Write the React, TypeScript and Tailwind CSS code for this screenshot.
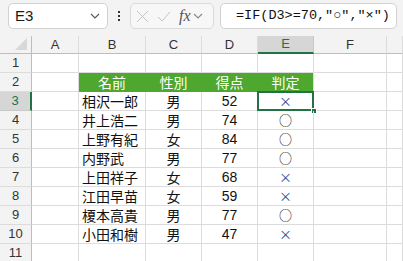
import React from 'react';

const rows = [
  { name: '相沢一郎', sex: '男', score: 52, ok: false },
  { name: '井上浩二', sex: '男', score: 74, ok: true },
  { name: '上野有紀', sex: '女', score: 84, ok: true },
  { name: '内野武', sex: '男', score: 77, ok: true },
  { name: '上田祥子', sex: '女', score: 68, ok: false },
  { name: '江田早苗', sex: '女', score: 59, ok: false },
  { name: '榎本高貴', sex: '男', score: 77, ok: true },
  { name: '小田和樹', sex: '男', score: 47, ok: false },
];

const cols = ['A', 'B', 'C', 'D', 'E', 'F', ''];

const font = { fontFamily: '"Noto Sans CJK JP", "Noto Sans", sans-serif' };

function Chevron({ className }: { className?: string }) {
  return (
    <svg width="10" height="6" viewBox="0 0 10 6" className={className}>
      <path d="M1 1 L5 5 L9 1" fill="none" stroke="currentColor" strokeWidth="1.1" />
    </svg>
  );
}

function Cell({ children, className = '' }: { children?: React.ReactNode; className?: string }) {
  return (
    <div className={`h-[19px] border-r border-b border-[#dcdcdc] flex items-center text-[14px] text-[#111] overflow-hidden ${className}`}>
      {children}
    </div>
  );
}

function RowHead({ n, active }: { n: number; active?: boolean }) {
  return (
    <div
      className={`h-[19px] flex items-center justify-center text-[13px] text-[#333] border-b ${
        active
          ? 'bg-[#d6d6d6] border-r-2 border-r-[#217346] border-b-[#c8c8c8] text-[#217346]'
          : 'bg-[#f3f3f3] border-r border-r-[#bdbdbd] border-b-[#dcdcdc]'
      }`}
      style={{ fontFamily: '"Liberation Sans", sans-serif' }}
    >
      {n}
    </div>
  );
}

export default function App() {
  return (
    <div className="w-[403px] h-[261px] overflow-hidden bg-white" style={font}>
      {/* formula bar */}
      <div className="h-[36px] bg-[#f3f3f3] flex items-start pt-[3px] pl-[8px]">
        <div className="w-[100px] h-[26px] bg-white border border-[#d2d2d2] rounded-[5px] flex items-center justify-between pl-[6px] pr-[7px]">
          <span className="text-[15px] text-[#1a1a1a]" style={{ fontFamily: '"Liberation Sans", sans-serif' }}>E3</span>
          <Chevron className="text-[#555]" />
        </div>
        <div className="w-[22px] h-[26px] flex flex-col items-center justify-center gap-[2px]">
          <span className="w-[2px] h-[2px] bg-[#333]" />
          <span className="w-[2px] h-[2px] bg-[#333]" />
          <span className="w-[2px] h-[2px] bg-[#333]" />
        </div>
        <div className="w-[84px] h-[26px] bg-[#f7f7f7] border border-[#dadada] rounded-[5px] flex items-center pl-[5px] gap-[8px] text-[#c4c4c4]">
          <svg width="13" height="13" viewBox="0 0 13 13">
            <path d="M1 1 L12 12 M12 1 L1 12" stroke="currentColor" strokeWidth="1" />
          </svg>
          <svg width="14" height="11" viewBox="0 0 14 11">
            <path d="M1 6 L5 10 L13 1" fill="none" stroke="currentColor" strokeWidth="1" />
          </svg>
          <div className="flex items-center gap-[2px]">
            <span className="text-[16px] italic text-[#555] leading-none" style={{ fontFamily: '"Liberation Serif", serif' }}>
              fx
            </span>
            <Chevron className="text-[#888]" />
          </div>
        </div>
        <div className="ml-[6px] w-[177px] h-[26px] bg-white border border-[#d2d2d2] rounded-[5px] flex items-center pl-[15px]">
          <span className="text-[13.5px] text-[#111] whitespace-nowrap" style={{ fontFamily: '"Liberation Mono", "Noto Sans CJK JP", monospace' }}>
            =IF(D3&gt;=70,"○","×")
          </span>
        </div>
      </div>

      {/* sheet */}
      <div className="grid grid-cols-[32px_47px_67px_56px_56px_56px_73px_1fr]">
        {/* column headers */}
        <div className="h-[18px] bg-[#f3f3f3] border-r border-b border-[#bdbdbd] relative">
          <svg width="12" height="12" viewBox="0 0 12 12" className="absolute right-[4px] bottom-[3px]">
            <path d="M12 0 L12 12 L0 12 Z" fill="#d8d8d8" />
          </svg>
        </div>
        {cols.map((c) => (
          <div
            key={c || 'g'}
            className={`h-[18px] flex items-center justify-center text-[13px] ${
              c === 'E'
                ? 'bg-[#d6d6d6] border-b-2 border-b-[#217346] border-r border-r-[#c8c8c8] text-[#217346]'
                : 'bg-[#f3f3f3] border-b border-b-[#bdbdbd] border-r border-r-[#dcdcdc] text-[#333]'
            }`}
            style={{ fontFamily: '"Liberation Sans", sans-serif' }}
          >
            {c}
          </div>
        ))}

        {/* row 1 */}
        <RowHead n={1} />
        {cols.map((c) => (
          <Cell key={'r1' + c} />
        ))}

        {/* row 2 */}
        <RowHead n={2} />
        <Cell />
        <Cell className="bg-[#4ea72e] border-r-[#4ea72e] border-b-[#4ea72e] justify-center text-white">名前</Cell>
        <Cell className="bg-[#4ea72e] border-r-[#4ea72e] border-b-[#4ea72e] justify-center text-white">性別</Cell>
        <Cell className="bg-[#4ea72e] border-r-[#4ea72e] border-b-[#4ea72e] justify-center text-white">得点</Cell>
        <Cell className="bg-[#4ea72e] border-b-[#4ea72e] justify-center text-white">判定</Cell>
        <Cell />
        <Cell />

        {rows.map((r, i) => (
          <React.Fragment key={r.name}>
            <RowHead n={i + 3} active={i === 0} />
            <Cell />
            <Cell className="pl-[3px]">{r.name}</Cell>
            <Cell className="justify-center">{r.sex}</Cell>
            <Cell className="justify-center" >
              <span style={{ fontFamily: '"Liberation Sans", sans-serif' }}>{r.score}</span>
            </Cell>
            <Cell className="justify-center relative overflow-visible">
              <span className={r.ok ? 'text-[#111] text-[13px]' : 'text-[#2b4a9a] text-[13px]'}>{r.ok ? '○' : '×'}</span>
              {i === 0 && (
                <>
                  <div className="absolute left-[-1px] top-[-1px] right-[-1px] bottom-[-1px] border-2 border-[#217346]" />
                  <div className="absolute right-[-4px] bottom-[-4px] w-[6px] h-[6px] bg-[#217346] border border-white" />
                </>
              )}
            </Cell>
            <Cell />
            <Cell />
          </React.Fragment>
        ))}

        <RowHead n={11} />
        {cols.map((c) => (
          <Cell key={'r11' + c} />
        ))}
      </div>
    </div>
  );
}
